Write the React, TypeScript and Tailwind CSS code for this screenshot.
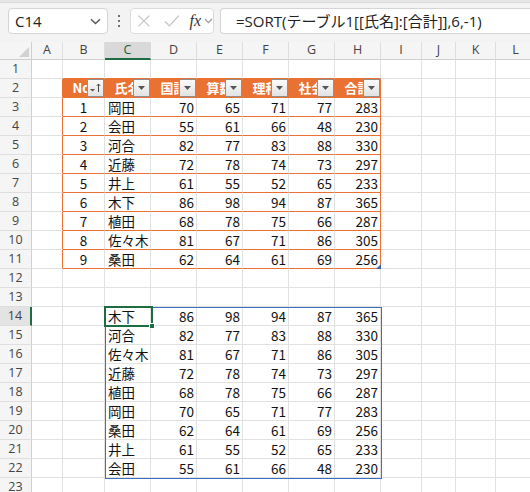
type Row = { no: number; name: string; scores: number[]; total: number };

const rows: Row[] = [
  { no: 1, name: "岡田", scores: [70, 65, 71, 77], total: 283 },
  { no: 2, name: "会田", scores: [55, 61, 66, 48], total: 230 },
  { no: 3, name: "河合", scores: [82, 77, 83, 88], total: 330 },
  { no: 4, name: "近藤", scores: [72, 78, 74, 73], total: 297 },
  { no: 5, name: "井上", scores: [61, 55, 52, 65], total: 233 },
  { no: 6, name: "木下", scores: [86, 98, 94, 87], total: 365 },
  { no: 7, name: "植田", scores: [68, 78, 75, 66], total: 287 },
  { no: 8, name: "佐々木", scores: [81, 67, 71, 86], total: 305 },
  { no: 9, name: "桑田", scores: [62, 64, 61, 69], total: 256 },
];

const sorted = [...rows].sort((a, b) => b.total - a.total);

const letters = ["A", "B", "C", "D", "E", "F", "G", "H", "I", "J", "K", "L"];
const heads = ["No.", "氏名", "国語", "算数", "理科", "社会", "合計"];

const cellFont = { fontFamily: '"Noto Sans CJK JP", "Noto Sans", sans-serif' };
const uiFont = { fontFamily: '"Open Sans", "Noto Sans", "Noto Sans CJK JP", sans-serif' };

function FilterButton({ sorted }: { sorted?: boolean }) {
  return (
    <div className="absolute right-0 top-0 flex h-[18px] w-[17px] items-center justify-center border border-[#8f8f8f] bg-gradient-to-b from-[#fbfbfb] to-[#e2e2e2]">
      {sorted ? (
        <svg width="13" height="12" viewBox="0 0 13 12">
          <path d="M1 7h5l-2.5 2.5z" fill="#555" />
          <path d="M9.5 2v8M7.8 3.8 9.5 2l1.7 1.8" stroke="#444" strokeWidth="1" fill="none" />
        </svg>
      ) : (
        <svg width="9" height="6" viewBox="0 0 9 6">
          <path d="M1 1h7L4.5 5z" fill="#555" />
        </svg>
      )}
    </div>
  );
}

function Cell({ r, c }: { r: number; c: number }) {
  const inTable = r >= 2 && r <= 11 && c >= 1 && c <= 7;
  const header = r === 2 && inTable;
  const orangeBottom = (r >= 1 && r <= 11 && c >= 1 && c <= 7);
  const orangeRight = (r >= 2 && r <= 11 && (c === 0 || c === 7)) || header;
  const bb = orangeBottom ? "border-b-[#e97132]" : "border-b-[#e1e1e1]";
  const br = orangeRight ? "border-r-[#e97132]" : "border-r-[#e1e1e1]";

  let content: React.ReactNode = null;
  let align = "justify-end pr-[2px]";

  if (header) {
    return (
      <div className={`relative flex items-center justify-center overflow-hidden border-r border-b bg-[#e97132] text-[13px] font-bold text-white ${bb} ${br}`} style={cellFont}>
        <span className="whitespace-nowrap">{heads[c - 1]}</span>
        <FilterButton sorted={c === 1} />
      </div>
    );
  }

  if (r >= 3 && r <= 11 && inTable) {
    const d = rows[r - 3];
    if (c === 1) {
      content = d.no;
      align = "justify-center";
    } else if (c === 2) {
      content = d.name;
      align = "justify-start pl-[3px]";
    } else if (c === 7) {
      content = d.total;
    } else {
      content = d.scores[c - 3];
    }
  }

  if (r >= 14 && r <= 22 && c >= 2 && c <= 7) {
    const d = sorted[r - 14];
    if (c === 2) {
      content = d.name;
      align = "justify-start pl-[3px]";
    } else if (c === 7) {
      content = d.total;
    } else {
      content = d.scores[c - 3];
    }
  }

  return (
    <div className={`flex items-center overflow-hidden whitespace-nowrap border-r border-b bg-white text-[13.5px] text-[#111] ${bb} ${br} ${align}`} style={cellFont}>
      {content}
    </div>
  );
}

export default function App() {
  const rowNums = Array.from({ length: 23 }, (_, i) => i + 1);

  return (
    <div className="h-[492px] w-[530px] overflow-hidden bg-[#f3f3f3]" style={uiFont}>
      <div className="h-[3px] border-b border-[#d8d8d8] bg-[#e6e6e6]" />
      <div className="flex h-[39px] items-start pt-[5px]">
        <div className="ml-[8px] flex h-[26px] w-[100px] items-center justify-between rounded-[4px] border border-[#d4d4d4] bg-white pl-[6px] pr-[6px] text-[15px] text-[#222]">
          <span>C14</span>
          <svg width="11" height="7" viewBox="0 0 11 7">
            <path d="M1 1.2 5.5 5.5 10 1.2" stroke="#555" strokeWidth="1.4" fill="none" />
          </svg>
        </div>
        <div className="flex h-[26px] w-[22px] flex-col items-center justify-center gap-[2.5px]">
          <span className="h-[2.5px] w-[2.5px] rounded-full bg-[#444]" />
          <span className="h-[2.5px] w-[2.5px] rounded-full bg-[#444]" />
          <span className="h-[2.5px] w-[2.5px] rounded-full bg-[#444]" />
        </div>
        <div className="flex h-[26px] w-[84px] items-center rounded-[4px] border border-[#dcdcdc] bg-white pl-[6px]">
          <svg width="14" height="14" viewBox="0 0 14 14">
            <path d="M1.5 1.5 12.5 12.5M12.5 1.5 1.5 12.5" stroke="#c4c4c4" strokeWidth="1.3" />
          </svg>
          <svg className="ml-[13px]" width="16" height="14" viewBox="0 0 16 14">
            <path d="M1 7.5 5.5 12 15 1.5" stroke="#c4c4c4" strokeWidth="1.3" fill="none" />
          </svg>
          <span className="ml-[10px] text-[16px] italic text-[#333]" style={{ fontFamily: '"Liberation Serif", "DejaVu Serif", serif' }}>
            fx
          </span>
          <svg className="ml-[3px]" width="9" height="6" viewBox="0 0 9 6">
            <path d="M1 1 4.5 4.6 8 1" stroke="#999" strokeWidth="1.2" fill="none" />
          </svg>
        </div>
        <div className="ml-[6px] flex h-[26px] flex-1 items-center rounded-l-[4px] border border-r-0 border-[#d4d4d4] bg-white pl-[15px] text-[15px] text-[#222]" style={{ fontFamily: '"Open Sans", "Noto Sans CJK JP", sans-serif' }}>
          <span className="whitespace-nowrap">=SORT(テーブル1[[氏名]:[合計]],6,-1)</span>
        </div>
      </div>

      <div className="relative grid grid-cols-[32px_31px_42px_46px_46px_46px_46px_46px_46px_41px_34px_40px_40px] grid-rows-[18px_repeat(23,19px)] bg-white">
        <div className="relative border-r border-b border-[#cfcfcf] bg-[#f5f5f5]">
          <svg className="absolute bottom-[2px] right-[2px]" width="10" height="10" viewBox="0 0 10 10">
            <path d="M10 0V10H0z" fill="#d2d2d2" />
          </svg>
        </div>
        {letters.map((l, i) =>
          i === 2 ? (
            <div key={l} className="flex items-center justify-center border-r border-r-[#d8d8d8] border-b-2 border-b-[#1e6c41] bg-[#d9d9d9] text-[12.5px] text-[#1e5c3a]">
              {l}
            </div>
          ) : (
            <div key={l} className="flex items-center justify-center border-r border-b border-r-[#dedede] border-b-[#cfcfcf] bg-[#f5f5f5] text-[12.5px] text-[#444]">
              {l}
            </div>
          ),
        )}
        {rowNums.map((r) => (
          <div key={r} className="contents">
            {r === 14 ? (
              <div className="flex items-center justify-center border-b border-r-2 border-b-[#dedede] border-r-[#1e6c41] bg-[#e3e3e3] text-[12.5px] text-[#444]">
                {r}
              </div>
            ) : (
              <div className="flex items-center justify-center border-r border-b border-r-[#cfcfcf] border-b-[#dedede] bg-[#f5f5f5] text-[12.5px] text-[#444]">
                {r}
              </div>
            )}
            {letters.map((_, c) => (
              <Cell key={c} r={r} c={c} />
            ))}
          </div>
        ))}

        <svg className="absolute left-[376px] top-[222px]" width="5" height="5" viewBox="0 0 5 5">
          <path d="M5 0V5H0z" fill="#3f63a8" />
        </svg>
        <div className="pointer-events-none absolute left-[105px] top-[265px] h-[172px] w-[277px] border border-[#3a6fc4]" />
        <div className="pointer-events-none absolute left-[104px] top-[264px] h-[21px] w-[49px] border-2 border-[#1e6c41]" />
        <div className="absolute left-[149px] top-[281px] h-[6px] w-[6px] border border-white bg-[#1e6c41]" />
      </div>
    </div>
  );
}
